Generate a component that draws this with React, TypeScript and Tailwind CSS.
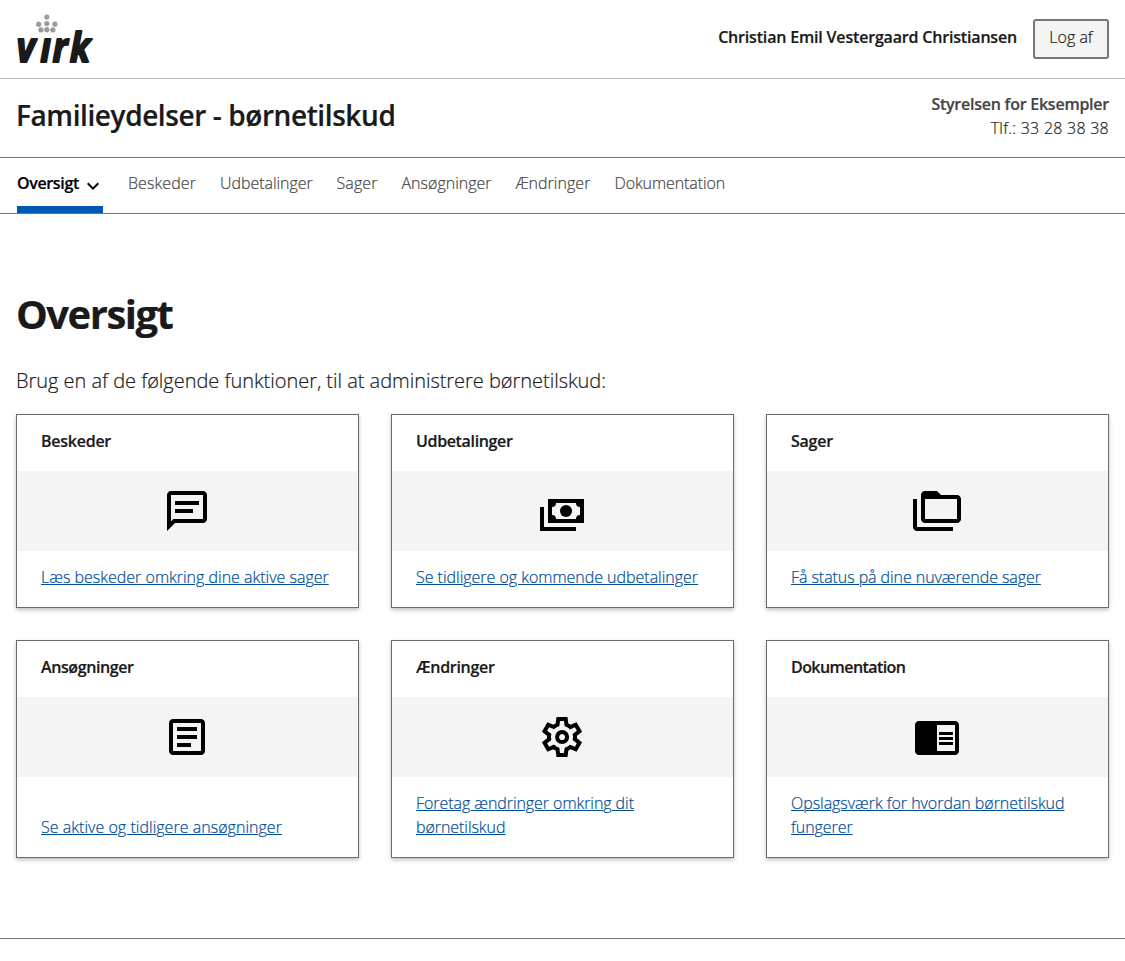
import type { ReactNode } from 'react';

type Card = {
  title: string;
  titleClass: string;
  link: string;
  linkClass: string;
  icon: ReactNode;
};

const navItems = [
  { label: 'Beskeder', className: 'w-[68px] tracking-[0.08px]' },
  { label: 'Udbetalinger', className: 'w-[92.5px] tracking-[-0.04px]' },
  { label: 'Sager', className: 'w-[41px] tracking-[0.1px]' },
  { label: 'Ansøgninger', className: 'w-[90px]' },
  { label: 'Ændringer', className: 'w-[75px] tracking-[0.05px]' },
  { label: 'Dokumentation', className: 'w-[111px] tracking-[-0.1px]' },
];

const cards: Card[] = [
  {
    title: 'Beskeder',
    titleClass: 'tracking-[-0.25px]',
    link: 'Læs beskeder omkring dine aktive sager',
    linkClass: '',
    icon: <path fillRule="evenodd" d="M22 4c0-1.1-.9-2-2-2H4c-1.1 0-2 .9-2 2v18l4-4h14c1.1 0 2-.9 2-2V4Zm-2 12H5.2L4 17.2V4h16v12ZM6 7h12v2H6V7Zm0 4h9v2H6v-2Z" />,
  },
  {
    title: 'Udbetalinger',
    titleClass: 'tracking-[-0.35px]',
    link: 'Se tidligere og kommende udbetalinger',
    linkClass: 'tracking-[-0.02px]',
    icon: (
      <>
        <path d="M1 10h2v10h16v2H1V10Z" />
        <path fillRule="evenodd" d="M5 6h18v12H5V6Zm4 2a2 2 0 0 1-2 2v4a2 2 0 0 1 2 2h10a2 2 0 0 1 2-2v-4a2 2 0 0 1-2-2H9Z" />
        <circle cx="14" cy="12" r="3" />
      </>
    ),
  },
  {
    title: 'Sager',
    titleClass: 'tracking-[-0.25px]',
    link: 'Få status på dine nuværende sager',
    linkClass: 'tracking-[-0.07px]',
    icon: (
      <>
        <path d="M0 6h2v14h18v2H2c-1.1 0-2-.9-2-2V6Z" />
        <path fillRule="evenodd" d="M22 4h-8l-2-2H6c-1.1 0-2 .9-2 2v12c0 1.1.9 2 2 2h16c1.1 0 2-.9 2-2V6c0-1.1-.9-2-2-2Zm0 12H6V6h16v10Z" />
      </>
    ),
  },
  {
    title: 'Ansøgninger',
    titleClass: 'tracking-[-0.4px]',
    link: 'Se aktive og tidligere ansøgninger',
    linkClass: 'tracking-[0.03px]',
    icon: <path fillRule="evenodd" d="M19 3H5c-1.1 0-2 .9-2 2v14c0 1.1.9 2 2 2h14c1.1 0 2-.9 2-2V5c0-1.1-.9-2-2-2Zm0 16H5V5h14v14ZM7 7h10v2H7V7Zm0 4h10v2H7v-2Zm0 4h7v2H7v-2Z" />,
  },
  {
    title: 'Ændringer',
    titleClass: 'tracking-[-0.3px]',
    link: 'Foretag ændringer omkring dit børnetilskud',
    linkClass: 'tracking-[-0.06px]',
    icon: (
      <g transform="translate(0 24) scale(.025)">
        <path d="m370-80-16-128q-13-5-24.5-12T307-235l-119 50L78-375l103-78q-1-7-1-13.5v-27q0-6.5 1-13.5L78-585l110-190 119 50q11-8 23-15t24-12l16-128h220l16 128q13 5 24.5 12t22.5 15l119-50 110 190-103 78q1 7 1 13.5v27q0 6.5-2 13.5l103 78-110 190-118-50q-11 8-23 15t-24 12L590-80H370Zm70-80h79l14-106q31-8 57.5-23.5T639-327l99 41 39-68-86-65q5-14 7-29.5t2-31.5q0-16-2-31.5t-7-29.5l86-65-39-68-99 42q-22-23-48.5-38.5T533-694l-13-106h-79l-14 106q-31 8-57.5 23.5T321-633l-99-41-39 68 86 64q-5 15-7 30t-2 32q0 16 2 31t7 30l-86 65 39 68 99-42q22 23 48.5 38.5T427-266l13 106Zm42-180q58 0 99-41t41-99q0-58-41-99t-99-41q-59 0-99.5 41T342-480q0 58 40.5 99t99.5 41Zm0-80q-25 0-42.5-17.5T422-480q0-25 17.5-42.5T482-540q25 0 42.5 17.5T542-480q0 25-17.5 42.5T482-420Z" />
      </g>
    ),
  },
  {
    title: 'Dokumentation',
    titleClass: 'tracking-[-0.57px]',
    link: 'Opslagsværk for hvordan børnetilskud fungerer',
    linkClass: 'tracking-[-0.04px]',
    icon: <path fillRule="evenodd" d="M3 4h18c1.1 0 2 .9 2 2v13c0 1.1-.9 2-2 2H3c-1.1 0-2-.9-2-2V6c0-1.1.9-2 2-2Zm9 2v13h9V6h-9Zm1 3.5h7V11h-7V9.5Zm0 2.5h7v1.5h-7V12Zm0 2.5h7V16h-7v-1.5Z" />,
  },
];

function Logo() {
  return (
    <svg className="h-16 w-[84px] overflow-visible" viewBox="0 0 84 64" role="img" aria-label="virk">
      <g fill="#9b9b9b">
        <circle cx="30.8" cy="10" r="2.6" />
        <circle cx="22.7" cy="17.2" r="2.6" />
        <circle cx="30.8" cy="16.6" r="2.6" />
        <circle cx="38.9" cy="17.2" r="2.6" />
        <circle cx="24.9" cy="22.9" r="2.6" />
        <circle cx="30.8" cy="22.7" r="2.6" />
        <circle cx="36.9" cy="22.9" r="2.6" />
      </g>
      <text
        x="0.5 27.5 41.5 61"
        y="54.6"
        transform="scale(.88 1)"
        strokeLinejoin="round"
        className="fill-[#1a1a1a] stroke-[#1a1a1a] stroke-[1.9px] font-['Open_Sans',sans-serif] text-[41px] font-bold italic"
      >
        vırk
      </text>
    </svg>
  );
}

function FunctionCard({ title, titleClass, link, linkClass, icon }: Card) {
  return (
    <article className="flex flex-col border border-[#6b6b6b] bg-white shadow-[0_2px_4px_rgba(0,0,0,0.25)]">
      <h2 className={`px-6 pt-[14px] pb-[18px] font-semibold ${titleClass}`}>{title}</h2>
      <div className="flex h-20 items-center justify-center bg-[#f4f4f4] pr-0.5">
        <svg className="size-12 fill-black" viewBox="0 0 24 24" aria-hidden="true">
          {icon}
        </svg>
      </div>
      <div className="mt-auto px-6 pt-[14px] pb-[18px]">
        <a href="#" className={`text-[#004d99] underline decoration-1 underline-offset-1 ${linkClass}`}>
          {link}
        </a>
      </div>
    </article>
  );
}

export default function App() {
  return (
    <div className="min-h-[961px] bg-white font-['Open_Sans',sans-serif] text-base font-light text-[#1a1a1a] [-webkit-text-stroke:0.2px]">
      <header>
        <div className="flex h-[79px] items-center justify-between border-b border-[#bfbfbf] px-4">
          <Logo />
          <div className="flex items-center gap-4">
            <span className="pb-1 font-semibold tracking-[-0.18px]">Christian Emil Vestergaard Christiansen</span>
            <button className="h-10 w-[76px] rounded-[3px] border-2 border-[#767676] bg-[#f4f4f4] pb-1 font-light">
              Log af
            </button>
          </div>
        </div>
        <div className="flex h-[79px] items-start justify-between border-b border-[#767676] px-4">
          <p className="pt-[18px] text-[28px] leading-9 font-semibold tracking-[-0.41px]">Familieydelser - børnetilskud</p>
          <div className="pt-[13px] text-right">
            <p className="font-semibold tracking-[-0.24px] text-[#454545]">Styrelsen for Eksempler</p>
            <p className="tracking-[0.25px]">Tlf.: 33 28 38 38</p>
          </div>
        </div>
        <nav className="flex h-14 gap-6 border-b border-[#767676] pl-[17px] text-[#454545]">
          <a href="#" className="flex w-[87px] shrink-0 flex-col justify-between text-black">
            <span className="flex h-10 items-start pt-[13px]">
              <span className="w-16 font-semibold tracking-[-0.35px]">Oversigt</span>
              <svg className="mt-[3px] -mr-1 size-6 shrink-0 fill-black" viewBox="0 0 24 24" aria-hidden="true">
                <path d="M16.59 8.59 12 13.17 7.41 8.59 6 10l6 6 6-6z" />
              </svg>
            </span>
            <span className="h-[7px] w-[86px] bg-[#0059b3]" />
          </a>
          {navItems.map((item) => (
            <a key={item.label} href="#" className={`shrink-0 pt-[13px] whitespace-nowrap ${item.className}`}>
              {item.label}
            </a>
          ))}
        </nav>
      </header>
      <main className="h-[725px] border-b border-[#767676] px-4 pt-[74px]">
        <h1 className="text-[40px] leading-[52px] font-bold tracking-[-1.5px]">Oversigt</h1>
        <p className="pt-[25px] pb-[17px] text-xl leading-8 tracking-[-0.03px]">
          Brug en af de følgende funktioner, til at administrere børnetilskud:
        </p>
        <div className="grid grid-cols-3 gap-8">
          {cards.map((card) => (
            <FunctionCard key={card.title} {...card} />
          ))}
        </div>
      </main>
    </div>
  );
}
